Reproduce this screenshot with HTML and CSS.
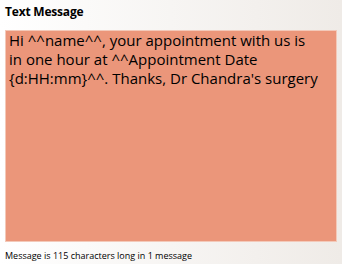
FILE: index.html
```html
<!DOCTYPE html>
<html>
<head>
<meta charset="utf-8">
<link rel="stylesheet" href="styles.css">
</head>
<body>
<div class="panel">
  <div class="title">Text Message</div>
  <div class="message">Hi ^^name^^, your appointment with us is in one hour at ^^Appointment Date {d:HH:mm}^^. Thanks, Dr Chandra's surgery</div>
  <div class="status">Message is 115 characters long in 1 message</div>
</div>
</body>
</html>
```
FILE: styles.css
```css
html, body {
  margin: 0;
  padding: 0;
}
body {
  width: 342px;
  height: 264px;
  overflow: hidden;
  background: linear-gradient(to right, #ffffff 0%, #f7f5f3 50%, #efebe7 100%);
  font-family: "Open Sans", "Noto Sans", sans-serif;
  color: #000;
}
.panel {
  display: flex;
  flex-direction: column;
  padding: 0 5px;
  height: 264px;
  box-sizing: border-box;
}
.title {
  font-weight: bold;
  font-size: 12px;
  line-height: 16px;
  padding-top: 4px;
  height: 26px;
  box-sizing: border-box;
  letter-spacing: -0.2px;
}
.message {
  height: 212px;
  box-sizing: border-box;
  background: #eb967a;
  border: 1px solid #f3c9b9;
  padding: 0 14px 0 3px;
  font-size: 15px;
  line-height: 19px;
  margin-top: 4px;
}
.status {
  font-size: 9px;
  line-height: 12px;
  padding-top: 8px;
}
```
